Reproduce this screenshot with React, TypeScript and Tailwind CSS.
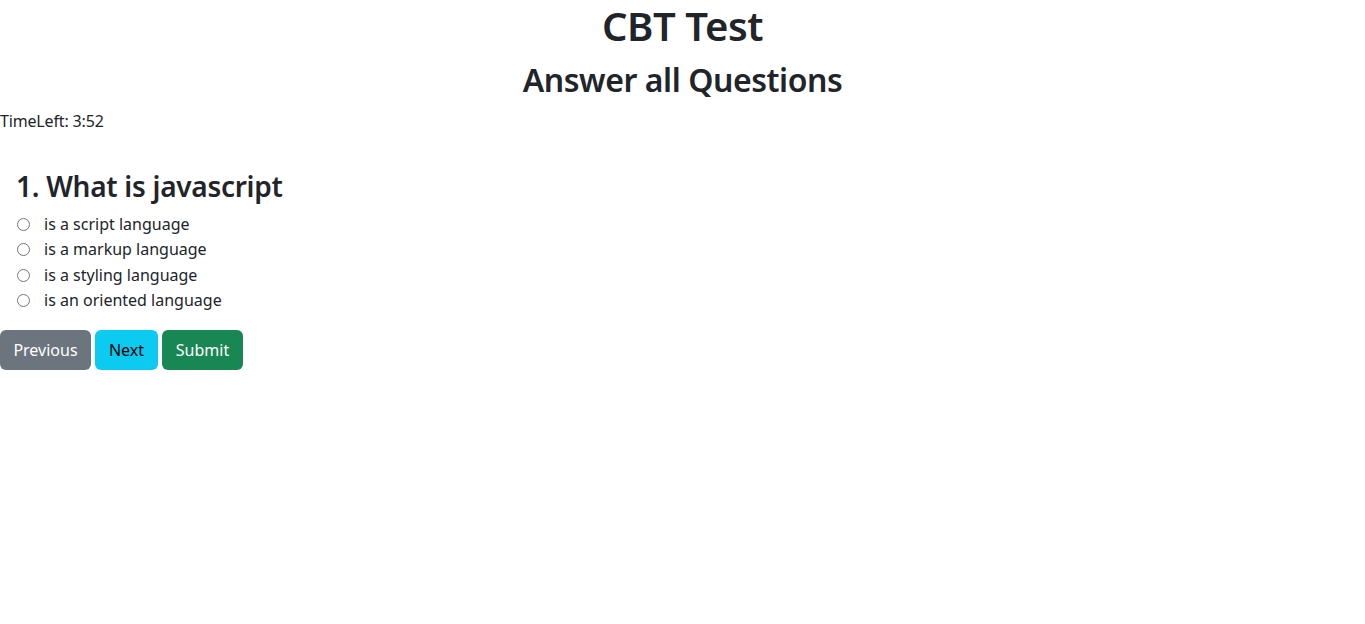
const options = [
  "is a script language",
  "is a markup language",
  "is a styling language",
  "is an oriented language",
];

export default function App() {
  return (
    <div className="min-h-screen bg-white text-[#212529] font-['Noto_Sans','Open_Sans',sans-serif] text-base">
      <div className="text-center pt-[2px]">
        <h1 className="text-[40px] font-semibold leading-[1.2] tracking-[-0.01em] mb-[11px]">CBT Test</h1>
        <h2 className="text-[32px] font-semibold leading-[1.2] tracking-[-0.014em] mb-[10px]">Answer all Questions</h2>
      </div>

      <p className="leading-6 mb-4 tracking-[-0.01em]">TimeLeft: 3:52</p>

      <div className="px-4 pt-[21px]">
        <h3 className="text-[28px] font-semibold leading-[1.2] tracking-[-0.01em] mb-2">1. What is javascript</h3>
        {options.map((opt, i) => (
          <label key={i} className="flex items-center leading-[25.33px]">
            <input type="radio" name="q1" value={opt} className="ml-[1px] mr-[14px] w-[13px] h-[13px]" />
            <span>{opt}</span>
          </label>
        ))}
      </div>

      <div className="mt-[17px] flex gap-1">
        <button className="h-10 w-[91px] rounded-md bg-[#6c757d] text-white">Previous</button>
        <button className="h-10 w-[63px] rounded-md bg-[#0dcaf0] text-black">Next</button>
        <button className="h-10 w-[81px] rounded-md bg-[#198754] text-white">Submit</button>
      </div>
    </div>
  );
}
